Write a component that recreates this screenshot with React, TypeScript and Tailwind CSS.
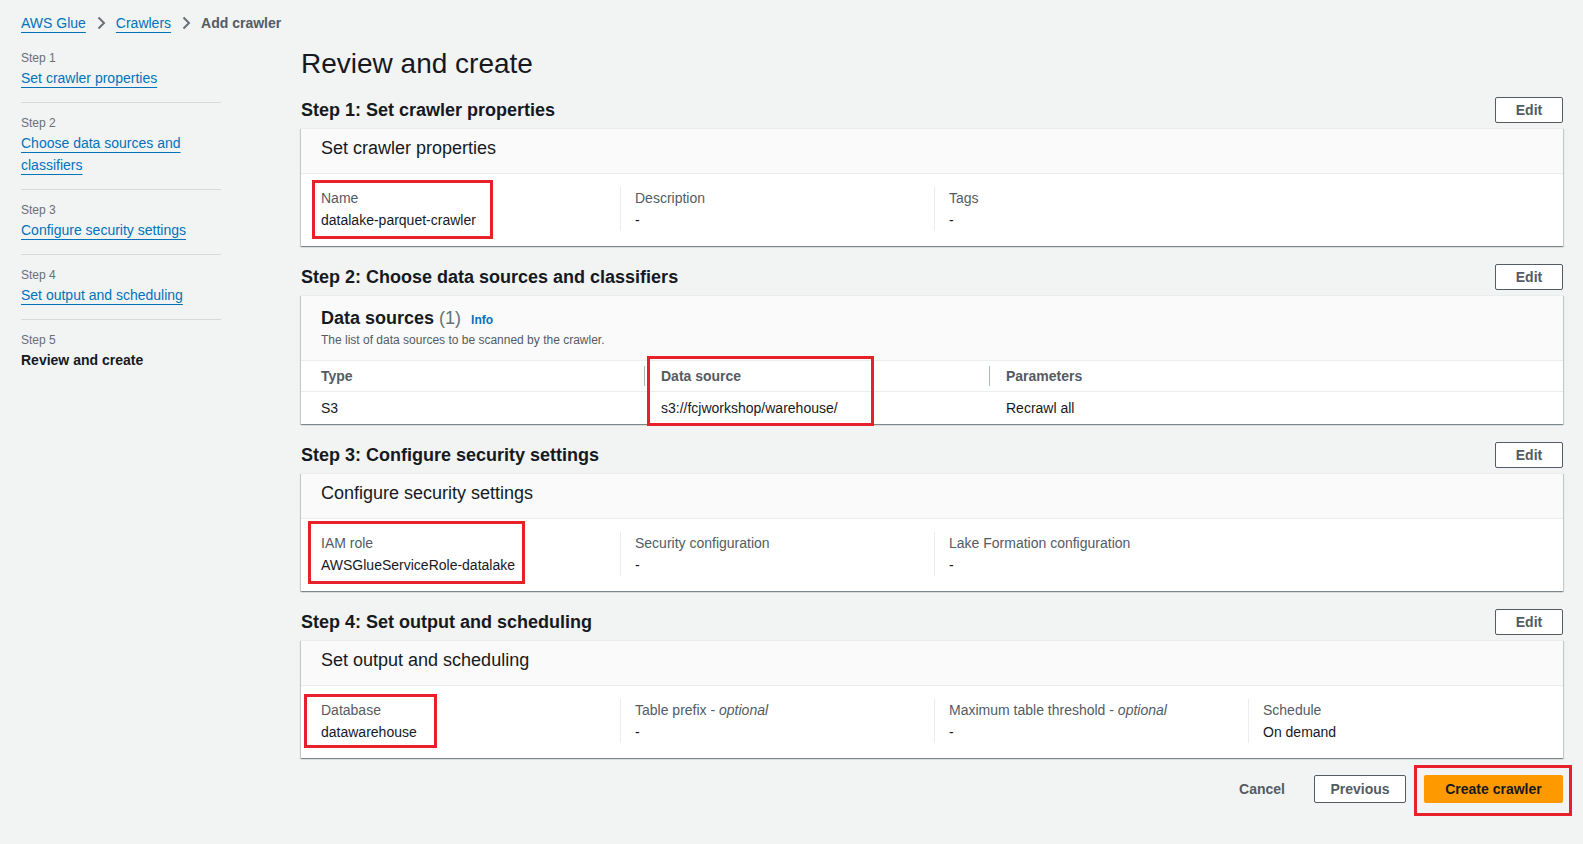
import { ReactNode } from "react";

const font = { fontFamily: "'Liberation Sans', Roboto, Arial, sans-serif" };

function Chevron() {
  return (
    <svg width="16" height="16" viewBox="0 0 16 16" className="mx-[7px]">
      <path d="M5.5 2.5 L11 8 L5.5 13.5" fill="none" stroke="#687078" strokeWidth="2" />
    </svg>
  );
}

function RedBox({ className }: { className: string }) {
  return <div className={"absolute border-[3px] border-[#e8202a] pointer-events-none " + className} />;
}

function SideStep({ n, label, active }: { n: number; label: string; active?: boolean }) {
  return (
    <div className="pt-[11px] pb-[13px] border-b border-[#d5dbdb] last:border-b-0">
      <div className="text-[12px] leading-[18px] text-[#687078]">Step {n}</div>
      {active ? (
        <div className="text-[14px] leading-[22px] font-bold text-[#16191f]">{label}</div>
      ) : (
        <div className="text-[14px] leading-[22px]">
          <a className="text-[#0073bb] underline underline-offset-[4px] decoration-1">{label}</a>
        </div>
      )}
    </div>
  );
}

function SectionHead({ title, first }: { title: string; first?: boolean }) {
  return (
    <div className={(first ? "mt-[15px]" : "mt-[18px]") + " flex items-center justify-between h-[26px]"}>
      <h2 className="text-[18px] font-bold text-[#16191f]">{title}</h2>
      <button className="w-[68px] h-[26px] bg-white border border-[#545b64] rounded-[2px] text-[14px] font-bold text-[#545b64]">
        Edit
      </button>
    </div>
  );
}

function Card({ title, children }: { title: ReactNode; children: ReactNode }) {
  return (
    <div className="mt-[5px] bg-white border-t border-[#eaeded] shadow-[0_1px_1px_0_rgba(0,28,36,0.3),1px_1px_1px_0_rgba(0,28,36,0.15),-1px_1px_1px_0_rgba(0,28,36,0.15)]">
      {title}
      {children}
    </div>
  );
}

function CardTitle({ text }: { text: string }) {
  return (
    <div className="h-[45px] px-5 pt-[8px] bg-[#fafafa] border-b border-[#eaeded] text-[18px] leading-[22px] text-[#16191f]">
      {text}
    </div>
  );
}

type Field = { label: ReactNode; value: string; box?: string };

function Fields({ items }: { items: Field[] }) {
  const widths = ["w-[299px]", "w-[314px]", "w-[314px]", "flex-1"];
  return (
    <div className="flex px-5 pt-[13px] pb-[15px]">
      {items.map((f, i) => (
        <div
          key={i}
          className={"relative " + widths[i] + (i > 0 ? " border-l border-[#eaeded] pl-[14px]" : "")}
        >
          <div className="text-[14px] leading-[22px] text-[#545b64]">{f.label}</div>
          <div className="text-[14px] leading-[22px] text-[#16191f]">{f.value}</div>
          {f.box && <RedBox className={f.box} />}
        </div>
      ))}
    </div>
  );
}

function Optional({ text }: { text: string }) {
  return (
    <>
      {text} - <i>optional</i>
    </>
  );
}

export default function App() {
  return (
    <div style={font} className="min-h-screen w-full bg-[#f2f3f3] text-[#16191f]">
      {/* Breadcrumb */}
      <div className="pt-[12px] pl-[21px] h-[34px] flex items-center text-[14px] leading-[22px]">
        <a className="text-[#0073bb] underline underline-offset-[4px] decoration-1">AWS Glue</a>
        <Chevron />
        <a className="text-[#0073bb] underline underline-offset-[4px] decoration-1">Crawlers</a>
        <Chevron />
        <span className="font-bold text-[#545b64]">Add crawler</span>
      </div>

      <div className="flex">
        {/* Sidebar */}
        <div className="w-[301px] shrink-0 pl-[21px] pr-[80px] mt-[4px]">
          <SideStep n={1} label="Set crawler properties" />
          <SideStep n={2} label="Choose data sources and classifiers" />
          <SideStep n={3} label="Configure security settings" />
          <SideStep n={4} label="Set output and scheduling" />
          <SideStep n={5} label="Review and create" active />
        </div>

        {/* Main */}
        <div className="flex-1 pr-[20px] mt-[12px]">
          <h1 className="text-[28px] leading-[36px] font-normal text-[#16191f]">Review and create</h1>

          <SectionHead title="Step 1: Set crawler properties" first />
          <Card title={<CardTitle text="Set crawler properties" />}>
            <Fields
              items={[
                { label: "Name", value: "datalake-parquet-crawler", box: "left-[-9px] top-[-7px] w-[181px] h-[59px]" },
                { label: "Description", value: "-" },
                { label: "Tags", value: "-" },
              ]}
            />
          </Card>

          <SectionHead title="Step 2: Choose data sources and classifiers" />
          <Card
            title={
              <div className="px-5 pt-[10px] pb-[12px] bg-[#fafafa]">
                <div className="flex items-baseline leading-[24px]">
                  <span className="text-[18px] font-bold text-[#16191f]">Data sources</span>
                  <span className="text-[18px] text-[#687078] ml-[5px]">(1)</span>
                  <a className="text-[12px] font-bold text-[#0073bb] ml-[10px]">Info</a>
                </div>
                <div className="text-[12px] leading-[16px] text-[#545b64]">The list of data sources to be scanned by the crawler.</div>
              </div>
            }
          >
            <div className="relative">
              <div className="flex h-[32px] items-center border-t border-b border-[#eaeded] text-[14px] font-bold text-[#545b64]">
                <div className="w-[343px] pl-5">Type</div>
                <div className="w-[345px] flex items-center">
                  <span className="w-px h-[20px] bg-[#aab7b8] mr-[16px]" />
                  Data source
                </div>
                <div className="flex-1 flex items-center">
                  <span className="w-px h-[20px] bg-[#aab7b8] mr-[16px]" />
                  Parameters
                </div>
              </div>
              <div className="flex h-[32px] items-center text-[14px] text-[#16191f]">
                <div className="w-[343px] pl-5">S3</div>
                <div className="w-[345px] pl-[17px]">s3://fcjworkshop/warehouse/</div>
                <div className="flex-1 pl-[17px]">Recrawl all</div>
              </div>
              <RedBox className="left-[346px] top-[-4px] w-[227px] h-[70px]" />
            </div>
          </Card>

          <SectionHead title="Step 3: Configure security settings" />
          <Card title={<CardTitle text="Configure security settings" />}>
            <Fields
              items={[
                { label: "IAM role", value: "AWSGlueServiceRole-datalake", box: "left-[-13px] top-[-11px] w-[217px] h-[63px]" },
                { label: "Security configuration", value: "-" },
                { label: "Lake Formation configuration", value: "-" },
              ]}
            />
          </Card>

          <SectionHead title="Step 4: Set output and scheduling" />
          <Card title={<CardTitle text="Set output and scheduling" />}>
            <Fields
              items={[
                { label: "Database", value: "datawarehouse", box: "left-[-17px] top-[-5px] w-[133px] h-[54px]" },
                { label: <Optional text="Table prefix" />, value: "-" },
                { label: <Optional text="Maximum table threshold" />, value: "-" },
                { label: "Schedule", value: "On demand" },
              ]}
            />
          </Card>

          {/* Actions */}
          <div className="mt-[17px] flex justify-end items-center text-[14px] font-bold">
            <button className="h-[28px] px-5 text-[#545b64]">Cancel</button>
            <button className="ml-[9px] h-[28px] w-[92px] bg-white border border-[#545b64] rounded-[2px] text-[#545b64]">
              Previous
            </button>
            <div className="relative ml-[18px]">
              <button className="h-[28px] w-[139px] bg-[#ff9900] rounded-[2px] text-[#16191f]">Create crawler</button>
              <RedBox className="left-[-10px] top-[-10px] w-[158px] h-[51px]" />
            </div>
          </div>
        </div>
      </div>
    </div>
  );
}
